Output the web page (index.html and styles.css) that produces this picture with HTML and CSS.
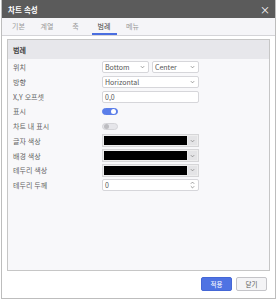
FILE: index.html
```html
<!DOCTYPE html>
<html lang="ko">
<head>
<meta charset="utf-8">
<link rel="stylesheet" href="styles.css">
</head>
<body>
<div class="dialog">
  <div class="titlebar">
    <span class="title">차트 속성</span>
    <span class="close">×</span>
  </div>
  <div class="tabs">
    <span class="tab">기본</span>
    <span class="tab">계열</span>
    <span class="tab">축</span>
    <span class="tab active">범례</span>
    <span class="tab">메뉴</span>
  </div>
  <div class="content">
    <div class="panel">
      <div class="panel-head">범례</div>
      <div class="rows">
        <div class="row">
          <span class="label">위치</span>
          <div class="field pair">
            <div class="select"><span>Bottom</span><svg class="chev" viewBox="0 0 6 4"><polyline points="1,1 3,3 5,1"/></svg></div>
            <div class="select"><span>Center</span><svg class="chev" viewBox="0 0 6 4"><polyline points="1,1 3,3 5,1"/></svg></div>
          </div>
        </div>
        <div class="row">
          <span class="label">방향</span>
          <div class="field">
            <div class="select"><span>Horizontal</span><svg class="chev" viewBox="0 0 6 4"><polyline points="1,1 3,3 5,1"/></svg></div>
          </div>
        </div>
        <div class="row">
          <span class="label">X,Y 오프셋</span>
          <div class="field"><div class="input">0,0</div></div>
        </div>
        <div class="row">
          <span class="label">표시</span>
          <div class="field"><span class="toggle on"><span class="knob"></span></span></div>
        </div>
        <div class="row">
          <span class="label">차트 내 표시</span>
          <div class="field"><span class="toggle"><span class="knob"></span></span></div>
        </div>
        <div class="row">
          <span class="label">글자 색상</span>
          <div class="field"><div class="color"><span class="swatch"></span><span class="cbtn"><svg class="chev" viewBox="0 0 6 4"><polyline points="1,1 3,3 5,1"/></svg></span></div></div>
        </div>
        <div class="row">
          <span class="label">배경 색상</span>
          <div class="field"><div class="color"><span class="swatch"></span><span class="cbtn"><svg class="chev" viewBox="0 0 6 4"><polyline points="1,1 3,3 5,1"/></svg></span></div></div>
        </div>
        <div class="row">
          <span class="label">테두리 색상</span>
          <div class="field"><div class="color"><span class="swatch"></span><span class="cbtn"><svg class="chev" viewBox="0 0 6 4"><polyline points="1,1 3,3 5,1"/></svg></span></div></div>
        </div>
        <div class="row">
          <span class="label">테두리 두께</span>
          <div class="field"><div class="input number"><span>0</span><svg class="spin" viewBox="0 0 6 9"><polyline points="1,3 3,1 5,3"/><polyline points="1,6 3,8 5,6"/></svg></div></div>
        </div>
      </div>
    </div>
  </div>
  <div class="footer">
    <button class="btn primary">적용</button>
    <button class="btn">닫기</button>
  </div>
</div>
</body>
</html>
```
FILE: styles.css
```css
* { box-sizing: border-box; }
html, body { margin: 0; padding: 0; background: #ffffff; }
body {
  font-family: "Noto Sans CJK KR", "Noto Sans", sans-serif;
  font-size: 7px;
  color: #555;
}
.dialog {
  width: 275px;
  height: 299px;
  margin-left: 1px;
  border: 1px solid #bdbdbd;
  border-top: none;
  background: #fff;
  display: flex;
  flex-direction: column;
}
.titlebar {
  height: 18px;
  background: #5b5b5b;
  color: #fff;
  display: flex;
  align-items: center;
  justify-content: space-between;
  padding: 1px 5px 0 6px;
}
.title { font-weight: bold; font-size: 7.5px; }
.close { font-size: 10px; line-height: 1; }
.tabs {
  height: 18px;
  background: #f5f5f8;
  border-bottom: 1px solid #d4d4d8;
  display: flex;
  gap: 3.5px;
  padding-left: 4px;
}
.tab {
  width: 25px;
  display: flex;
  align-items: center;
  justify-content: center;
  color: #999;
  border-bottom: 2px solid transparent;
}
.tab.active { color: #444; border-bottom-color: #4a6ee0; }
.content { padding: 3px 5px 0 5px; }
.panel {
  height: 232px;
  border: 1px solid #c6c6c6;
  background: #f8f8fa;
}
.panel-head {
  height: 19px;
  background: #e7e7eb;
  font-weight: bold;
  color: #444;
  display: flex;
  align-items: center;
  padding-left: 5px;
}
.rows {
  display: flex;
  flex-direction: column;
  gap: 2.75px;
  padding: 2px 0 0 5px;
}
.row {
  height: 12px;
  display: flex;
  align-items: center;
}
.label { width: 89px; color: #666; }
.field { width: 97px; height: 12px; display: flex; align-items: center; }
.pair { gap: 3px; }
.select, .input {
  flex: 1;
  height: 12px;
  background: #fff;
  border: 1px solid #d6d6da;
  border-radius: 2px;
  display: flex;
  align-items: center;
  justify-content: space-between;
  padding: 0 3px 0 2px;
  color: #555;
}
.chev { width: 5px; height: 4px; fill: none; stroke: #888; stroke-width: 1; }
.spin { width: 5px; height: 8px; fill: none; stroke: #888; stroke-width: 1; }
.toggle {
  width: 16px;
  height: 7px;
  border-radius: 4px;
  background: #e6e6ea;
  border: 1px solid #d4d4d8;
  display: flex;
  align-items: center;
  padding: 0 1px;
}
.toggle .knob { width: 5px; height: 5px; border-radius: 50%; background: #bdbdc1; }
.toggle.on { background: #5b7ee9; border-color: #5b7ee9; justify-content: flex-end; }
.toggle.on .knob { background: #fff; }
.color {
  width: 97px;
  height: 13px;
  display: flex;
  border: 1px solid #d6d6d8;
  background: #eee;
  padding: 1px;
  gap: 1px;
}
.swatch { flex: 1; background: #000; }
.cbtn {
  width: 9px;
  background: #e4e4e6;
  display: flex;
  align-items: center;
  justify-content: center;
}
.footer {
  display: flex;
  justify-content: flex-end;
  gap: 4px;
  padding: 6px 8px 0 0;
}
.btn {
  font-family: inherit;
  font-size: 6.5px;
  height: 14px;
  width: 31px;
  border-radius: 2px;
  border: 1px solid #c4c4c8;
  background: #f4f4f6;
  color: #555;
  padding: 0;
}
.btn.primary { background: #4f73e3; border-color: #4467d6; color: #fff; }
```
